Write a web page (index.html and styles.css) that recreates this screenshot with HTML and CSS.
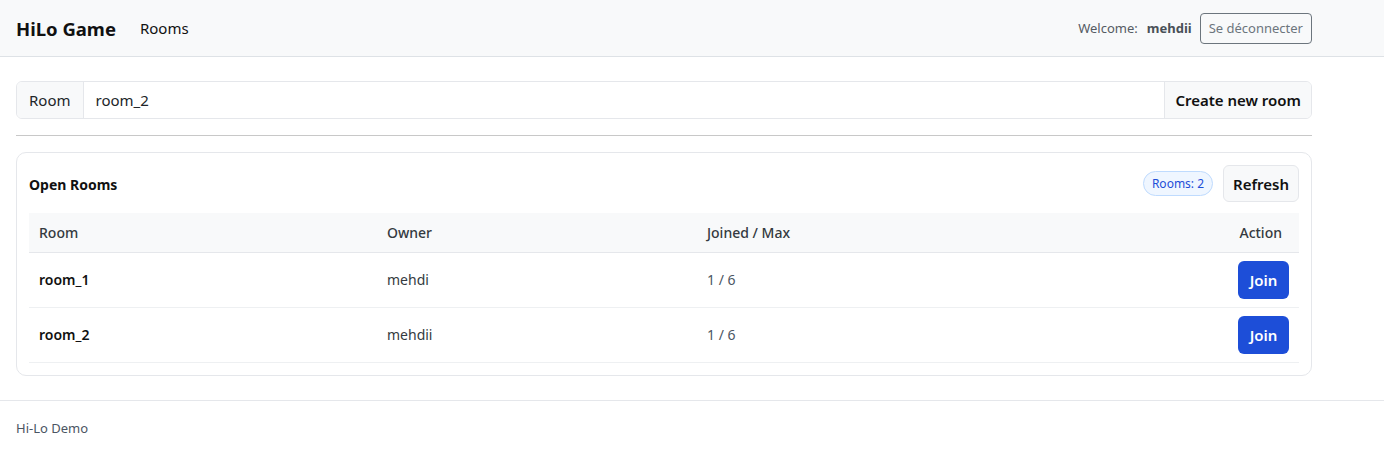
FILE: index.html
```html
<!DOCTYPE html>
<html lang="fr">
<head>
<meta charset="utf-8">
<title>HiLo Game</title>
<link rel="stylesheet" href="styles.css">
</head>
<body>
<header class="topbar">
  <div class="brand-row">
    <span class="brand">HiLo Game</span>
    <a class="nav-link">Rooms</a>
  </div>
  <div class="user-row">
    <span class="welcome">Welcome:</span>
    <strong class="user">mehdii</strong>
    <button class="btn-outline">Se déconnecter</button>
  </div>
</header>
<main class="container">
  <div class="input-group">
    <span class="addon">Room</span>
    <input class="field" type="text" value="room_2">
    <button class="addon-btn">Create new room</button>
  </div>
  <hr class="divider">
  <section class="card">
    <div class="card-head">
      <h2 class="card-title">Open Rooms</h2>
      <div class="card-tools">
        <span class="badge">Rooms: 2</span>
        <button class="btn-light">Refresh</button>
      </div>
    </div>
    <table class="rooms">
      <thead>
        <tr><th class="c-room">Room</th><th class="c-owner">Owner</th><th class="c-joined">Joined / Max</th><th class="c-action">Action</th></tr>
      </thead>
      <tbody>
        <tr><td class="name">room_1</td><td>mehdi</td><td class="count">1 / 6</td><td class="c-action"><button class="btn-primary">Join</button></td></tr>
        <tr><td class="name">room_2</td><td>mehdii</td><td class="count">1 / 6</td><td class="c-action"><button class="btn-primary">Join</button></td></tr>
      </tbody>
    </table>
  </section>
</main>
<footer class="footer">Hi-Lo Demo</footer>
</body>
</html>
```
FILE: styles.css
```css
* { box-sizing: border-box; }
body {
  margin: 0;
  font-family: "Noto Sans", "Open Sans", sans-serif;
  color: #212529;
  background: #fff;
}
button { font-family: inherit; cursor: pointer; }
.topbar {
  height: 57px;
  background: #f8f9fa;
  border-bottom: 1px solid #dee2e6;
  display: flex;
  align-items: center;
  justify-content: space-between;
  padding: 0 72px 0 16px;
}
.brand-row { display: flex; align-items: center; gap: 24px; }
.brand { font-size: 18.5px; font-weight: 700; color: #111; }
.nav-link { font-size: 15px; color: #111; }
.user-row { display: flex; align-items: center; font-size: 13px; color: #555b63; }
.welcome { margin-right: 9px; }
.user { color: #495057; font-weight: 700; margin-right: 8px; }
.btn-outline {
  height: 31px;
  padding: 0 8px;
  font-size: 13px;
  color: #6c757d;
  background: transparent;
  border: 1px solid #6c757d;
  border-radius: 4px;
}
.container { width: 1296px; padding: 0; margin: 24px 0 0 16px; }
.input-group {
  display: flex;
  height: 38px;
  border: 1px solid #e5e7eb;
  border-radius: 6px;
  overflow: hidden;
}
.addon {
  display: flex; align-items: center;
  padding: 0 12px;
  font-size: 15px;
  background: #f8f9fa;
  border-right: 1px solid #e5e7eb;
  color: #212529;
}
.field {
  flex: 1;
  border: 0;
  padding: 0 12px;
  font-size: 15px;
  font-family: inherit;
  color: #212529;
  outline: none;
}
.addon-btn {
  border: 0;
  border-left: 1px solid #e5e7eb;
  background: #f8f9fa;
  padding: 0 10px;
  font-size: 15px;
  font-weight: 600;
  color: #111;
}
.divider { border: 0; border-top: 1px solid #c8c8c8; margin: 16px 0 16px; }
.card {
  border: 1px solid #e5e7eb;
  border-radius: 10px;
  padding: 12px 12px 12px;
}
.card-head { display: flex; align-items: center; justify-content: space-between; margin-bottom: 11px; }
.card-title { margin: 2px 0 0; font-size: 14px; font-weight: 700; color: #111; }
.card-tools { display: flex; align-items: center; gap: 10px; }
.badge {
  font-size: 12px;
  color: #1d4ed8;
  background: #eff6ff;
  border: 1px solid #bfdbfe;
  border-radius: 999px;
  padding: 3px 8px;
  line-height: 17px;
}
.btn-light {
  height: 37px;
  padding: 0 9px;
  font-size: 15px;
  font-weight: 600;
  color: #111;
  background: #f8f9fa;
  border: 1px solid #e5e7eb;
  border-radius: 6px;
}
.rooms { width: 100%; border-collapse: collapse; font-size: 14px; }
.rooms th {
  background: #f8f9fa;
  font-weight: 500;
  text-align: left;
  height: 39px;
  padding: 0 10px;
  color: #343a40;
  border-bottom: 1px solid #e5e7eb;
}
.rooms td {
  height: 55px;
  padding: 0 10px;
  border-bottom: 1px solid #eef0f2;
  color: #343a40;
}
.rooms .c-room { width: 348px; }
.rooms .c-owner { width: 320px; }
.rooms .c-action { text-align: right; }
.rooms th.c-action { padding-right: 17px; }
.rooms td.name { font-weight: 600; color: #111; }
.rooms td.count { color: #4b5563; }
.btn-primary {
  height: 38px;
  width: 51px;
  background: #1d4ed8;
  color: #fff;
  border: 0;
  border-radius: 6px;
  font-size: 15px;
  font-weight: 600;
}
.footer {
  margin-top: 24px;
  border-top: 1px solid #e5e7eb;
  padding: 18px 16px;
  font-size: 13px;
  color: #4b5563;
}
```
